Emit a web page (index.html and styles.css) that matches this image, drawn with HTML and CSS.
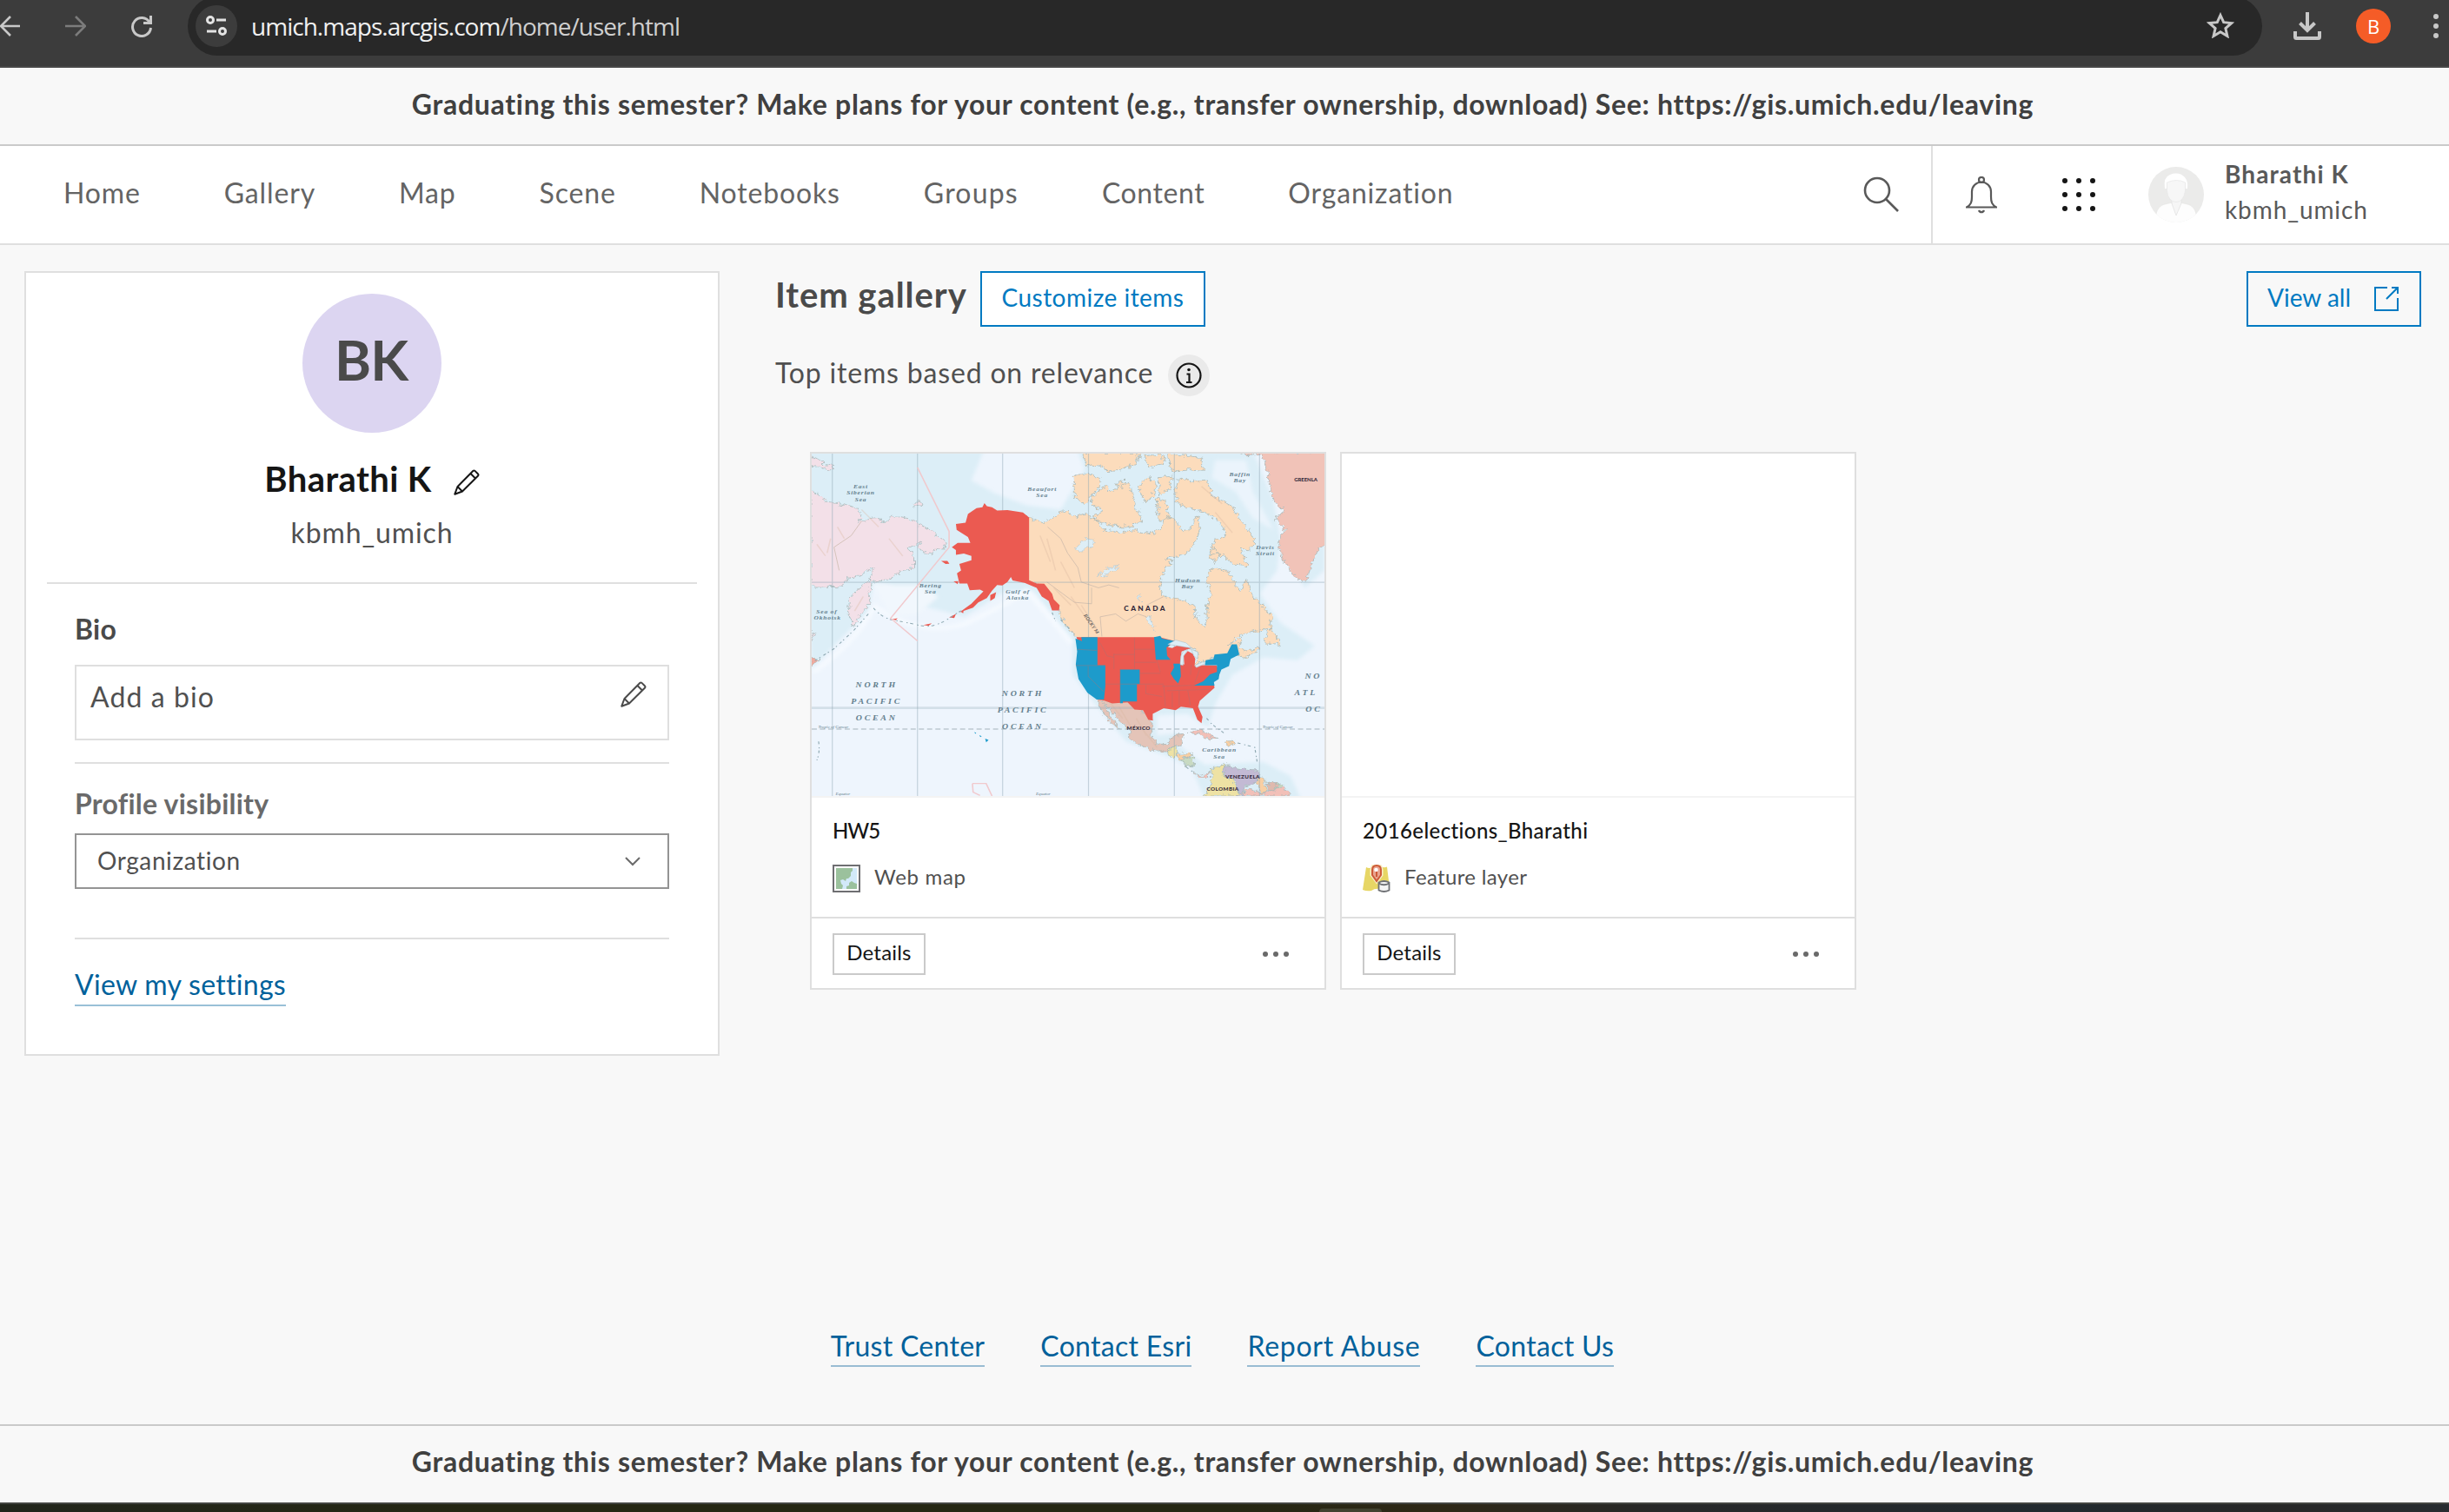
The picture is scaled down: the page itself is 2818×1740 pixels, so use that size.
FILE: index.html
```html
<!DOCTYPE html>
<html lang="en">
<head>
<meta charset="utf-8">
<title>My profile</title>
<link rel="stylesheet" href="styles.css">
</head>
<body>
<div class="chrome">
  <svg class="chrome-back" viewBox="0 0 24 26"><path d="M23 13H2M12 2 1 13l11 11"/></svg>
  <svg class="chrome-forward" viewBox="0 0 24 26"><path d="M0 13h21M12 2l11 11-11 11"/></svg>
  <svg class="chrome-reload" viewBox="0 0 24 26"><path d="M21 8.500A10.500 10.500 0 1 0 22.500 15M22.500 1v8.500H14"/></svg>
  <div class="omnibox">
    <span class="site-info"><svg viewBox="0 0 26 26"><circle cx="6" cy="6" r="3.500"/><path d="M13 6h11M2 19h11"/><circle cx="20" cy="19" r="3.500"/></svg></span>
    <span class="url">umich.maps.arcgis.com<span class="url-path">/home/user.html</span></span>
    <svg class="star" viewBox="0 0 32 30"><path d="M16 3.500l3.700 8.200 9 .9-6.800 6 2 8.900-7.900-4.700-7.900 4.700 2-8.900-6.800-6 9-.9z"/></svg>
  </div>
  <svg class="download" viewBox="0 0 32 32"><path d="M16 0v20M7.500 12.500 16 21l8.500-8.500M2 22v6.500q0 1.500 1.500 1.500h25q1.500 0 1.500-1.500V22"/></svg>
  <span class="account">B</span>
  <svg class="kebab" viewBox="0 0 6 30"><circle cx="3" cy="4" r="3"/><circle cx="3" cy="15" r="3"/><circle cx="3" cy="26" r="3"/></svg>
</div>

<div class="banner banner-top">Graduating this semester? Make plans for your content (e.g., transfer ownership, download) See: https://gis.umich.edu/leaving</div>

<header class="header">
  <nav class="nav">
    <a>Home</a><a>Gallery</a><a>Map</a><a>Scene</a><a>Notebooks</a><a class="groups">Groups</a><a class="content">Content</a><a>Organization</a>
  </nav>
  <div class="search"><svg viewBox="0 0 42 42"><circle cx="16" cy="16" r="14"/><path d="M26 26l14 14"/></svg></div>
  <div class="tools">
    <svg class="bell" viewBox="0 0 36 43"><circle cx="18" cy="4" r="3"/><path d="M1 35.500c5-3 6-6 6-12v-6a11 11 0 0 1 22 0v6c0 6 1 9 6 12zM15 39a3.200 3.200 0 0 0 6 0"/></svg>
    <svg class="waffle" viewBox="0 0 40 40"><circle cx="4" cy="4" r="3"/><circle cx="20" cy="4" r="3"/><circle cx="36" cy="4" r="3"/><circle cx="4" cy="20" r="3"/><circle cx="20" cy="20" r="3"/><circle cx="36" cy="20" r="3"/><circle cx="4" cy="36" r="3"/><circle cx="20" cy="36" r="3"/><circle cx="36" cy="36" r="3"/></svg>
    <svg class="avatar-small" viewBox="0 0 64 64">
      <defs><clipPath id="disc"><circle cx="32" cy="32" r="32"/></clipPath></defs>
      <g clip-path="url(#disc)"><rect width="64" height="64" fill="#ebebea"/>
      <path d="M9 66V54q2-9 10-11l9-2h8l9 2q8 2 10 11v12z" fill="#fdfdfd" stroke="#e4e4e3" stroke-width=".6"/>
      <path d="M27 36v6l5 14 6-14v-6z" fill="#f6f6f6" stroke="#e2e2e2" stroke-width=".8"/>
      <path d="M19 25q-2-13 6-16 10-4 17 3 4 5 3 13z" fill="#fff"/>
      <path d="M21.500 18q11-5 21 0v10q-2 12-10.500 12.500Q23 40 21.500 28z" fill="#f7f7f7" stroke="#e8e8e8" stroke-width=".8"/></g>
    </svg>
    <div class="who"><div class="who-name">Bharathi K</div><div class="who-id">kbmh_umich</div></div>
  </div>
</header>

<main class="main">
  <section class="profile">
    <div class="avatar">BK</div>
    <div class="name-row"><h1 class="name">Bharathi K</h1>
      <svg class="pencil" viewBox="0 0 30 30"><path d="M1.300 28.700 4.500 20 22.500 1.800q1-.8 2 .1l3.600 3.600q.8 1 0 2L10 25.500zM19.500 5l5.500 5.500M4.500 20l5.500 5.500"/></svg></div>
    <div class="handle">kbmh_umich</div>
    <hr class="rule-wide">
    <div class="profile-body">
      <h2 class="bio-title">Bio</h2>
      <div class="bio-box"><span>Add a bio</span>
        <svg class="pencil" viewBox="0 0 30 30"><path d="M1.300 28.700 4.500 20 22.500 1.800q1-.8 2 .1l3.600 3.600q.8 1 0 2L10 25.500zM19.500 5l5.500 5.500M4.500 20l5.500 5.500"/></svg></div>
      <hr class="rule-bio">
      <h2 class="vis-title">Profile visibility</h2>
      <div class="select"><span>Organization</span><svg viewBox="0 0 18 11"><path d="M1 1l8 8 8-8"/></svg></div>
      <hr class="rule-vis">
      <a class="settings">View my settings</a>
    </div>
  </section>

  <section class="gallery">
    <div class="gallery-head">
      <h2 class="gallery-title">Item gallery</h2>
      <a class="btn customize">Customize items</a>
      <a class="btn view-all">View all<svg viewBox="0 0 28 28"><path d="M15 1H1v26h26V13M20 1h7v7M27 1 14 14"/></svg></a>
    </div>
    <div class="relevance"><span>Top items based on relevance</span>
      <span class="info"><svg viewBox="0 0 30 30"><circle cx="15" cy="15" r="13.500"/><path d="M12.500 13.500h3V23M12 23h6.500"/><circle class="dot" cx="15" cy="8.500" r="1.800"/></svg></span></div>

    <div class="cards">
      <article class="card">
        <svg class="thumb" viewBox="35 37 1493 1181" preserveAspectRatio="none">
          <defs>
            <filter id="coast" x="-5%" y="-5%" width="110%" height="110%"><feTurbulence type="fractalNoise" baseFrequency=".07" numOctaves="3" seed="4"/><feDisplacementMap in="SourceGraphic" scale="24" xChannelSelector="R" yChannelSelector="G"/></filter>
            <filter id="shelf" x="-10%" y="-10%" width="120%" height="120%"><feGaussianBlur stdDeviation="6"/></filter>
          </defs>
          <rect x="35" y="37" width="1493" height="1181" fill="#eef5fd"/>
          <g fill="#dceef7" filter="url(#shelf)">
            <path d="M0 0H545L500 130 570 175 660 215 760 230 830 90 800 0H1310L1380 200 1400 330 1390 440 1340 520 1400 620 1500 700 1450 750 1350 740 1260 800 1210 900 1190 980 1160 960 1130 935 1040 940 1040 1010 1110 1000 1100 1040 1180 1110 1350 1100 1430 1150 1460 1230H1180L1140 1120 1070 1080 950 1030 860 900 795 800 795 680 740 600 680 510 600 510 480 600 350 560 260 490 215 480 200 580 100 700 35 780z"/>
            <path d="M1420 380L1470 500 1528 440V330z"/>
          </g>
          <path d="M215 560 Q340 670 480 625 Q600 560 660 510 Q700 560 790 690M215 570 Q160 690 40 790" fill="none" stroke="#f6faff" stroke-width="14" filter="url(#shelf)"/>
          <path d="M1210 60h90l20 110 60 130-60-40-50-90-70-50z" fill="#ebf4fc" filter="url(#shelf)"/>
          <path d="M215 490h130l60 40-60 60-80 10z" fill="#f1f7fd" filter="url(#shelf)"/>
          <g class="land" filter="url(#coast)">
            <path fill="#f3e0e8" d="M30 165 60 180 75 205 115 210 165 222 180 250 170 272 215 258 250 275 265 250 310 258 350 280 385 305 425 345 420 370 400 362 385 388 345 365 355 340 318 362 335 400 335 430 300 440 255 475 210 478 200 520 205 550 180 590 157 632 142 590 145 540 170 505 205 470 215 432 180 455 140 470 122 498 30 495zM30 50 60 60 72 75 100 80 88 95 50 78 30 82zM330 215 345 200 363 210 348 220zM30 640 45 660 30 680z"/>
            <path fill="#f0aa9e" d="M30 738 55 748 30 772z"/>
            <path fill="#f1c3b8" d="M1270 30 1300 42 1345 37 1360 90 1370 150 1382 200 1412 240 1382 262 1415 300 1393 345 1405 400 1435 455 1475 482 1490 420 1510 365 1540 345V30z"/>
            <path fill="#fcdcbc" d="M668 257 710 277 760 240 780 235 790 255 830 245 870 270 885 300 935 310 975 300 1020 315 1050 295 1070 255 1090 265 1105 290 1120 310 1140 290 1160 250 1165 300 1145 360 1120 385 1065 400 1085 405 1060 440 1048 500 1060 530 1100 540 1150 560 1155 600 1175 632 1187 610 1185 560 1200 530 1185 480 1195 440 1225 435 1250 445 1262 480 1285 512 1300 470 1315 520 1345 560 1375 600 1370 640 1330 648 1280 665 1245 700 1290 668 1280 700 1295 720 1337 705 1330 720 1295 745 1280 730 1210 735 1180 755 1145 772 1160 740 1155 715 1110 690 1085 685 1050 680 820 680 795 655 768 620 755 575 700 490 660 478V257zM1348 690 1370 640 1385 665 1400 700 1380 692zM800 105 850 108 880 130 868 160 850 180 830 212 800 190zM855 180 890 150 905 168 960 130 970 180 985 240 1000 268 960 290 900 285 852 262 885 235 850 212zM985 150 1015 120 1035 140 1030 190 1005 205zM1045 120 1087 115 1075 160 1050 180zM1040 190 1065 200 1078 260 1045 268zM1100 128 1125 120 1140 135 1190 130 1200 180 1255 215 1280 260 1325 330 1312 370 1285 365 1305 430 1260 415 1215 380 1195 390 1205 340 1240 320 1225 270 1170 235 1130 225 1095 205zM815 32H990L980 75 900 102 880 80 840 75zM1000 45 1055 40 1062 75 1015 85zM1070 37 1170 50 1175 95 1130 90 1085 100zM920 140 945 130 940 160zM1195 355 1225 385 1215 410 1190 395z"/>
            <path fill="#e4c4b8" d="M866 884 955 892 995 920 1028 958 1022 1005 1040 1038 1072 1040 1090 1010 1117 1005 1110 1045 1078 1050 1070 1065 1040 1065 985 1040 960 1018 962 990 925 950 885 895 930 990 905 965 880 925z"/>
            <path fill="#eee2a4" d="M1075 1055 1095 1045 1100 1080 1085 1085 1072 1075zM1195 1125 1240 1108 1232 1150 1265 1165 1280 1218H1180L1195 1180 1205 1150z"/>
            <path fill="#f9cfa3" d="M1100 1075 1145 1072 1130 1085 1105 1090zM1235 1030 1262 1028 1270 1040 1240 1042zM1328 1145 1355 1160 1360 1205 1345 1212 1335 1185z"/>
            <path fill="#c8dac2" d="M1112 1092 1145 1080 1145 1115 1125 1115zM1390 1172 1408 1182 1395 1202 1383 1195z"/>
            <path fill="#f2c0b8" d="M1130 1000 1160 990 1217 1020 1195 1022 1160 1003zM1148 1140 1175 1148 1195 1135 1192 1155 1160 1150zM1270 1218 1310 1190 1345 1212 1380 1195 1410 1190 1430 1218z"/>
            <path fill="#c3bad4" d="M1240 1115 1290 1125 1330 1128 1340 1150 1325 1175 1300 1180 1290 1215 1275 1205 1270 1165 1235 1150z"/>
            <path fill="#dfb9ae" d="M1362 1170 1390 1172 1385 1200 1362 1198z"/>
          </g>
          <g class="lake" filter="url(#coast)"><path d="M800 365 830 330 860 335 850 360 815 375zM870 455 900 430 930 425 905 450 880 462zM1003 595 1020 600 1035 645 1018 630zM985 525 992 520 990 548z"/></g>
          <path class="border-line" d="M722 290 760 330 780 380 810 430 820 480 870 500 900 490 930 500M720 480 800 550 850 555 850 500M880 668 875 600 920 590 950 615 985 590 1010 600M1060 530 1010 560M115 440 100 360 150 320 180 270"/>
          <path class="relief" d="M700 320 730 410M720 330 745 440M760 410 800 500M740 500 790 560M790 530 850 630M820 560 870 650M50 350 75 390M90 330 80 380M110 290 130 330M930 910 970 990M980 950 1010 1010M1000 990 1040 1050M900 890 940 950M1170 150 1230 210M1210 240 1260 310M160 580 185 530M180 230 230 290M260 330 300 390"/>
          <path class="graticule" d="M95 37V1218M343 37V1218M591 37V1218M841 37V1218M1091 37V1218M1339 37V1218M35 481H1528"/>
          <path d="M35 914H1528" stroke="#8ea6b2" stroke-opacity=".28" stroke-width="8"/>
          <path d="M35 987H1528" stroke="#a3b3bb" stroke-width="3" stroke-dasharray="15 9"/>
          <g fill="#eb5a51">
            <path d="M538 208 545 218 560 222 575 233 605 232 650 240 668 257V474L690 485 712 486 735 520 740 540 757 560 755 578 735 578 725 545 705 530 690 500 655 483 620 475 615 463 605 480 590 492 575 490 560 510 545 535 520 550 505 568 465 585 500 555 535 512 525 506 495 508 488 485 465 485 458 450 470 440 465 418 500 405 500 390 478 382 455 386 455 370 443 360 460 345 497 345 490 325 457 300 455 280 483 275 490 245 515 225 532 222zM555 525 572 515 568 535 555 545zM412 407 430 407 436 417 425 418zM448 478 462 477 460 487zM435 602 455 590 450 604zM468 582 478 575 476 588zM360 628 385 622 375 631zM270 608 285 605 280 612z"/>
            <path d="M806 670H1048L1092 684 1072 705 1085 708 1100 698 1140 708 1112 720 1108 760 1120 765 1118 735 1130 718 1145 728 1152 745 1150 768 1180 767 1215 768 1222 800 1205 826 1208 845 1165 890 1160 910 1173 945 1170 967 1158 955 1145 915 1110 910 1095 922 1060 915 1028 935 1028 958 1015 955 1000 922 975 920 955 895 910 899 885 888 865 885z"/>
          </g>
          <path fill="#1d9bcb" d="M803 675 822 684 820 670H867V767H890V840L886 885H865L838 862 812 815 804 765 808 720zM933 782H990V832H982V892H941V898H933zM1032 670 1050 666 1055 675 1092 684 1068 706 1070 735 1080 748H1037zM1088 762H1108L1110 805 1102 830 1090 815 1080 795 1090 775zM1180 767 1182 750 1205 745 1208 730 1245 726 1258 695H1273L1280 730 1255 745 1250 770 1228 782 1222 800 1220 815 1206 825 1208 837H1148L1175 822 1195 798 1215 790V767zM540 1020 550 1025 543 1033zM508 998 514 1000 512 1004zM523 1008 530 1012 526 1015z"/>
          <g class="lake"><path d="M1072 695 1095 680 1125 690 1142 708 1110 702 1090 698zM1118 718 1130 712 1118 735 1116 768 1108 765 1110 735zM1140 712 1160 722 1158 745 1148 735zM1150 768 1175 755 1180 762 1155 775z"/></g>
          <path class="states" d="M808 712 865 716M804 768H890M840 770V805L885 858M875 690 895 735 915 740M915 727V780M975 672V782M975 712H1035M915 730H975M975 757H1038M1040 750 1050 790M990 795H1050M890 832H1060M933 780V895M1008 835V865L1055 875M1060 835 1065 910M1085 860V912M1105 855V905M1130 855 1138 905M1055 840 1148 836M1140 765 1138 800M1165 780 1150 830M1070 855 1200 850"/>
          <path d="M215 570Q240 605 275 612T350 630 435 605 470 584M200 590 155 650 100 710 40 755M55 1030Q60 1065 50 1095M735 585 745 615M760 610 800 660M1185 950 1200 970 1240 1005M1275 1035 1325 1050 1332 1100M1125 1118 1145 1135" fill="none" stroke="#8fa9b2" stroke-width="3" stroke-dasharray="9 11 4 7"/>
          <path d="M343 85 435 305V360L265 605 343 683M503 1175H543L560 1218M503 1175 505 1205 525 1216" fill="none" stroke="#f1c9cd" stroke-width="4"/>
          <g class="sea small"><text x="178" y="156">East</text><text x="178" y="179">Siberian</text><text x="178" y="201">Sea</text><text x="706" y="165">Beaufort</text><text x="706" y="187">Sea</text><text x="1282" y="114">Baffin</text><text x="1282" y="137">Bay</text><text x="1356" y="366">Davis</text><text x="1356" y="388">Strait</text><text x="381" y="498">Bering</text><text x="381" y="520">Sea</text><text x="635" y="519">Gulf of</text><text x="635" y="541">Alaska</text><text x="1130" y="480">Hudson</text><text x="1130" y="502">Bay</text><text x="79" y="590">Sea of</text><text x="81" y="611">Okhotsk</text><text x="1222" y="1066">Caribbean</text><text x="1222" y="1090">Sea</text></g>
          <g class="sea tiny"><text x="98" y="984">Tropic of Cancer</text><text x="1392" y="984">Tropic of Cancer</text><text x="126" y="1216">Equator</text><text x="709" y="1216">Equator</text></g>
          <g class="sea ocean"><text x="224" y="844">NORTH</text><text x="224" y="901">PACIFIC</text><text x="224" y="958">OCEAN</text><text x="650" y="873">NORTH</text><text x="650" y="931">PACIFIC</text><text x="650" y="988">OCEAN</text><text class="edge" x="1471" y="812">NO</text><text class="edge" x="1441" y="869">ATL</text><text class="edge" x="1473" y="926">OC</text></g>
          <g class="country"><text class="wide" x="1007" y="579">CANADA</text><text x="987" y="989">MÉXICO</text><text x="1232" y="1201">COLOMBIA</text><text x="1290" y="1157">VENEZUELA</text><text class="edge" x="1440" y="134">GREENLA</text><text class="rocky" transform="translate(826 595) rotate(60)">ROCKY M</text></g>
        </svg>
        <div class="card-body"><h3 class="card-title hw">HW5</h3>
          <div class="card-type"><svg viewBox="0 0 32 32"><rect x="1" y="1" width="30" height="30" fill="#fff" stroke="#6e6e72" stroke-width="2"/><path fill="#d2e9f9" d="M4 4h24v24H4z"/><path fill="#9bc19d" d="M4 4h19v3l-2 2v4l-3 3-2 0-1 3-3-2-3 1 1 4 2 2-1 4H4zM16 28v-3l3-1v-3l3-2 3 2 3 1v6z"/></svg><span>Web map</span></div></div>
        <div class="card-foot"><a class="details">Details</a><svg viewBox="0 0 30 6"><circle cx="3" cy="3" r="3"/><circle cx="15" cy="3" r="3"/><circle cx="27" cy="3" r="3"/></svg></div>
      </article>
      <article class="card">
        <div class="thumb"></div>
        <div class="card-body"><h3 class="card-title">2016elections_Bharathi</h3>
          <div class="card-type feature"><svg viewBox="0 0 32 32"><path fill="#e7d665" d="M4 3q3 1.500 6 .5L23 3q3 .5 5-.5L31 27q-5 2-11 1T10 30q-5 1-10-1z"/><path d="M16 0q6 0 6 6v6l-6 8-6-8V6q0-6 6-6z" fill="#e69c85" stroke="#f8efc8" stroke-width="3"/><path d="M16 1q5 0 5 5v6l-5 7-5-7V6q0-5 5-5z" fill="#e9a48f" stroke="#cd5a37" stroke-width="2"/><circle cx="15.500" cy="6" r="2.300" fill="#fff"/><path d="M16 8v6" stroke="#cd5a37"/><path d="M18.500 20.500v9q6 3 12 0v-9q-6-3-12 0z" fill="#f4f4f4" stroke="#6e7074" stroke-width="1.800"/><path d="M18.500 21.500q6 3.500 12 0" fill="none" stroke="#6e7074" stroke-width="1.800"/></svg><span>Feature layer</span></div></div>
        <div class="card-foot"><a class="details">Details</a><svg viewBox="0 0 30 6"><circle cx="3" cy="3" r="3"/><circle cx="15" cy="3" r="3"/><circle cx="27" cy="3" r="3"/></svg></div>
      </article>
    </div>
  </section>
</main>

<footer class="links"><a>Trust Center</a><a>Contact Esri</a><a class="report">Report Abuse</a><a>Contact Us</a></footer>
<div class="banner banner-bottom">Graduating this semester? Make plans for your content (e.g., transfer ownership, download) See: https://gis.umich.edu/leaving</div>
<div class="taskbar"><span class="taskbar-tab"></span></div>
</body>
</html>
```
FILE: styles.css
```css
* { box-sizing: border-box; }
body { margin: 0; height: 1740px; display: flex; flex-direction: column; overflow: hidden; background: #f8f8f8; color: #505050; font: 400 32px/40px Lato, "Open Sans", sans-serif; }
h1, h2, h3 { margin: 0; font: inherit; }
hr { margin: 0; border: 0; height: 2px; background: #dfdfdf; }
svg { display: block; flex: none; fill: none; stroke-width: 2; }
a, span, div { white-space: nowrap; }

/* browser toolbar */
.chrome { flex: none; height: 78px; display: flex; align-items: flex-start; background: #3c3c3c; border-bottom: 2px solid #484848; overflow: hidden; }
.chrome-back, .chrome-forward, .chrome-reload { width: 24px; height: 26px; margin-top: 17px; stroke: #c8c8c8; stroke-width: 2.6; }
.chrome-forward { margin-left: 51px; stroke: #7c7c7c; }
.chrome-reload { margin-left: 52px; stroke-width: 3; }
.omnibox { margin: -4px 0 0 41px; flex: 0 0 2387px; height: 68px; display: flex; align-items: center; background: #282828; border-radius: 34px; padding: 0 32px 0 9px; }
.site-info { width: 48px; height: 48px; border-radius: 50%; background: #3c3c3c; display: flex; align-items: center; justify-content: center; }
.site-info svg { width: 26px; height: 26px; stroke: #e3e3e3; stroke-width: 3; }
.url { margin-left: 16px; font: 400 28px/40px "Open Sans", sans-serif; letter-spacing: -.98px; color: #f0f0f0; }
.url-path { color: #cfcfcf; }
.star { width: 32px; height: 30px; margin-left: auto; margin-top: -2px; stroke: #c8c8c8; stroke-width: 3; }
.download { width: 32px; height: 32px; margin: 14px 0 0 36px; stroke: #c8c8c8; stroke-width: 4; }
.account { width: 40px; height: 40px; margin: 10px 0 0 40px; border-radius: 50%; background: #f55c27; color: #fff; font: 400 22px/40px "Open Sans", sans-serif; text-align: center; }
.kebab { width: 6px; height: 30px; margin: 15px 0 0 49px; fill: #c8c8c8; }

.banner { flex: none; text-align: center; padding-right: 4px; font-weight: 700; letter-spacing: .7px; color: #404040; }
.banner-top { height: 90px; line-height: 83px; border-bottom: 2px solid #cacaca; }
.banner-bottom { height: 90px; line-height: 81px; border-top: 2px solid #cacaca; }

/* site header */
.header { flex: none; height: 114px; display: flex; background: #fff; border-bottom: 2px solid #dfdfdf; color: #595959; }
.nav { display: flex; gap: 96px; padding-left: 73px; line-height: 107px; letter-spacing: .85px; color: #646464; }
.nav .groups { letter-spacing: 1.2px; }
.nav .content { letter-spacing: .6px; }
.search { margin-left: auto; width: 78px; padding-top: 35px; }
.search svg { width: 42px; height: 42px; stroke: #595959; stroke-width: 2.6; }
.tools { width: 596px; border-left: 2px solid #dfdfdf; display: flex; align-items: center; padding-left: 38px; }
.bell { width: 36px; height: 43px; stroke: #595959; stroke-width: 2.2; }
.waffle { width: 40px; height: 40px; margin-left: 74px; fill: #151515; }
.avatar-small { width: 64px; height: 64px; margin-left: 60px; }
.who { margin-left: 24px; font-size: 28px; line-height: 41px; padding-bottom: 6px; }
.who-name { font-weight: 700; letter-spacing: 1.1px; }
.who-id { letter-spacing: .9px; }

.main { flex: none; height: 1243px; display: flex; align-items: flex-start; padding: 30px 32px 0 28px; }

/* profile card */
.profile { width: 800px; height: 903px; background: #fff; border: 2px solid #dfdfdf; padding: 24px 24px 0; display: flex; flex-direction: column; align-items: center; }
.avatar { width: 160px; height: 160px; border-radius: 50%; background: #dcd5f1; text-align: center; font-size: 64px; line-height: 151px; font-weight: 700; letter-spacing: -1px; padding-right: 2px; color: #4a4a4a; }
.name-row { display: flex; align-items: center; gap: 25px; margin-top: 29px; height: 48px; color: #151515; }
.name { font-size: 40px; font-weight: 700; line-height: 48px; letter-spacing: .4px; }
.pencil { width: 30px; height: 30px; stroke: #4a4a4a; stroke-width: 2; stroke-linejoin: round; }
.name-row .pencil { stroke: #151515; margin-top: 7px; }
.handle { margin-top: 18px; letter-spacing: .9px; }
.rule-wide { width: 748px; margin-top: 37px; }
.profile-body { width: 684px; }
.bio-title { margin-top: 32px; font-weight: 700; letter-spacing: .3px; color: #4a4a4a; }
.bio-box { margin-top: 21px; height: 87px; border: 2px solid #dfdfdf; display: flex; justify-content: space-between; padding: 15px 24px 0 16px; letter-spacing: 1.1px; }
.bio-box .pencil { margin-top: 2px; }
.rule-bio { margin-top: 25px; }
.vis-title { margin-top: 26px; font-weight: 700; letter-spacing: .24px; color: #6a6a6a; }
.select { margin-top: 14px; height: 64px; border: 2px solid #949494; display: flex; align-items: center; justify-content: space-between; padding: 0 31px 0 24px; font-size: 28px; letter-spacing: .6px; }
.select span { padding-bottom: 3px; }
.select svg { width: 18px; height: 11px; stroke: #6a6a6a; }
.rule-vis { margin-top: 56px; }
.settings { display: inline-block; margin-top: 28px; line-height: 47px; border-bottom: 2px solid #99c0d7; color: #00619b; letter-spacing: .3px; }

/* item gallery */
.gallery { flex: 1; margin-left: 64px; }
.gallery-head { display: flex; align-items: flex-start; height: 64px; }
.gallery-title { width: 220px; font-size: 40px; line-height: 55px; font-weight: 700; letter-spacing: .95px; white-space: nowrap; color: #4a4a4a; }
.btn { height: 64px; border: 2px solid #007ac2; color: #007ac2; font-size: 28px; line-height: 56px; }
.customize { margin-left: 16px; width: 259px; background: #fff; text-align: center; letter-spacing: .48px; }
.view-all { margin-left: auto; width: 201px; padding-left: 22px; display: flex; gap: 27px; }
.view-all svg { width: 28px; height: 28px; margin-top: 16px; stroke: #007ac2; }
.relevance { margin-top: 32px; height: 48px; display: flex; gap: 17px; line-height: 42px; letter-spacing: .82px; }
.info { width: 48px; height: 48px; border-radius: 50%; background: #eaeaea; display: flex; align-items: center; justify-content: center; }
.info svg { width: 30px; height: 30px; stroke: #151515; stroke-width: 2.2; }
.info .dot { fill: #151515; stroke: none; }
.cards { margin: 64px 0 0 40px; display: flex; gap: 16px; font-size: 24px; line-height: 30px; }
.card { width: 594px; height: 619px; background: #fff; border: 2px solid #dfdfdf; }
.thumb { width: 590px; height: 396px; border-bottom: 2px solid #f3f3f3; }
.card-body { height: 139px; border-bottom: 2px solid #dfdfdf; padding: 23px 24px 0; }
.card-title { font-weight: 500; color: #151515; letter-spacing: .4px; }
.card-title.hw { letter-spacing: -1px; }
.card-type { display: flex; gap: 16px; margin-top: 24px; line-height: 27px; letter-spacing: .7px; }
.card-type.feature { letter-spacing: .35px; }
.card-type svg { width: 32px; height: 32px; }
.card-foot { display: flex; justify-content: space-between; align-items: center; height: 81px; padding: 0 41px 0 24px; }
.card-foot svg { width: 30px; height: 6px; fill: #6a6a6a; }
.details { width: 107px; height: 48px; border: 2px solid #cacaca; text-align: center; line-height: 40px; color: #151515; letter-spacing: .2px; }

/* map thumbnail */
.land path { stroke: #a3b5b5; stroke-width: 2; }
.lake path { fill: #deeef6; stroke: #a8c0cb; stroke-width: 1.5; }
.border-line { stroke: #c9b8a9; stroke-width: 2; }
.relief { stroke: #d9b8a0; stroke-opacity: .35; stroke-width: 4; }
.states { stroke: #a97372; stroke-opacity: .6; stroke-width: 2; }
.graticule { stroke: #8fa6b3; stroke-opacity: .45; stroke-width: 3; }
.sea { fill: #64808e; font-family: "Liberation Serif", serif; font-style: italic; text-anchor: middle; }
.small { font-size: 19px; font-weight: 700; letter-spacing: 2px; }
.tiny { font-size: 13px; }
.ocean { font-size: 25px; font-weight: 700; letter-spacing: 7px; }
.sea .edge, .country .edge { text-anchor: start; }
.country { fill: #33293a; font-family: Lato, sans-serif; font-size: 16px; font-weight: 900; text-anchor: middle; letter-spacing: 1px; }
.country .edge { font-size: 15px; letter-spacing: 0; }
.country .wide { font-size: 21px; letter-spacing: 6px; }
.country .rocky { font-size: 15px; font-weight: 700; text-anchor: start; fill: #6d6663; }

/* page footer */
.links { flex: none; height: 114px; display: flex; justify-content: center; align-items: flex-start; gap: 64px; padding-right: 5px; line-height: 47px; color: #00619b; letter-spacing: .3px; }
.links a { height: 48px; border-bottom: 2px solid #99bcd3; }
.links .report { letter-spacing: .72px; }
.taskbar { flex: none; height: 11px; border-top: 2px solid #444642; background: linear-gradient(90deg, #22261c, #252713 20%, #252713 50%, #2e2817 59%, #272829 68%, #222a2f 84%, #272727 93%, #272c30); display: flex; align-items: flex-end; }
.taskbar-tab { width: 72px; height: 4px; margin-left: 1518px; background: #41412f; border-radius: 4px 4px 0 0; }
```
